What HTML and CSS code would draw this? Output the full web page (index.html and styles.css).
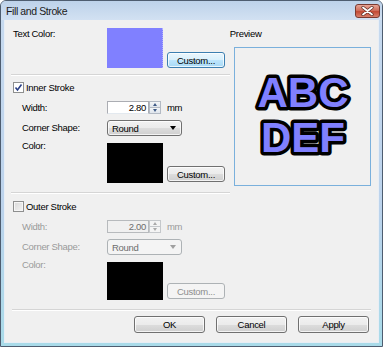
FILE: index.html
```html
<!DOCTYPE html>
<html lang="en">
<head>
    <meta charset="UTF-8">
    <title>Fill and Stroke</title>
    <link rel="stylesheet" href="styles.css">
</head>
<body>

    <div class="window">
        <div class="titlebar">
            <span class="title">Fill and Stroke</span>
            <span class="close-btn">
                <svg width="13" height="10" viewBox="0 0 13 10">
                    <path d="M2 1.5 L11 8.5 M11 1.5 L2 8.5" stroke="#5a2a22" stroke-width="3.2" stroke-linecap="round"/>
                    <path d="M2 1.5 L11 8.5 M11 1.5 L2 8.5" stroke="#fff" stroke-width="1.8" stroke-linecap="round"/>
                </svg>
            </span>
        </div>

        <div class="client">
            <div class="main">
                <div class="settings">
                    <!-- Text color -->
                    <div class="row color-row first">
                        <span class="label">Text Color:</span>
                        <div class="swatch swatch-blue"></div>
                        <button class="btn btn-small btn-hot">Custom...</button>
                    </div>

                    <div class="separator"></div>

                    <!-- Inner stroke -->
                    <div class="check-row inner">
                        <span class="checkbox checked">
                            <svg width="9" height="9" viewBox="0 0 9 9">
                                <path d="M1.5 4.5 L3.5 7 L7.5 1.5" fill="none" stroke="#2a3f86" stroke-width="1.6"/>
                            </svg>
                        </span>
                        <span>Inner Stroke</span>
                    </div>
                    <div class="row sub-row spin-row">
                        <span class="label">Width:</span>
                        <div class="spin-field">2.80</div>
                        <div class="spin-buttons">
                            <span class="spin-btn"><i class="arrow-up"></i></span>
                            <span class="spin-btn"><i class="arrow-down"></i></span>
                        </div>
                        <span class="unit">mm</span>
                    </div>
                    <div class="row sub-row combo-row">
                        <span class="label">Corner Shape:</span>
                        <div class="combo"><span>Round</span><i class="combo-arrow"></i></div>
                    </div>
                    <div class="row sub-row color-row">
                        <span class="label">Color:</span>
                        <div class="swatch swatch-black"></div>
                        <button class="btn btn-small">Custom...</button>
                    </div>

                    <div class="separator second"></div>

                    <!-- Outer stroke (disabled) -->
                    <div class="check-row outer">
                        <span class="checkbox"></span>
                        <span>Outer Stroke</span>
                    </div>
                    <div class="disabled">
                        <div class="row sub-row spin-row">
                            <span class="label">Width:</span>
                            <div class="spin-field">2.00</div>
                            <div class="spin-buttons">
                                <span class="spin-btn"><i class="arrow-up"></i></span>
                                <span class="spin-btn"><i class="arrow-down"></i></span>
                            </div>
                            <span class="unit">mm</span>
                        </div>
                        <div class="row sub-row combo-row">
                            <span class="label">Corner Shape:</span>
                            <div class="combo"><span>Round</span><i class="combo-arrow"></i></div>
                        </div>
                        <div class="row sub-row color-row short">
                            <span class="label">Color:</span>
                            <div class="swatch swatch-black"></div>
                            <button class="btn btn-small" disabled>Custom...</button>
                        </div>
                    </div>
                </div>

                <div class="preview">
                    <span class="label">Preview</span>
                    <div class="preview-box">
                        <svg width="135" height="137" viewBox="0 0 135 137">
                            <g class="preview-text">
                                <text x="68" y="59">ABC</text>
                                <text x="68" y="104">DEF</text>
                            </g>
                        </svg>
                    </div>
                </div>
            </div>

            <div class="footer">
                <div class="separator wide"></div>
                <div class="actions">
                    <button class="btn btn-action">OK</button>
                    <button class="btn btn-action">Cancel</button>
                    <button class="btn btn-action">Apply</button>
                </div>
            </div>
        </div>
    </div>

</body>
</html>
```

FILE: styles.css
```css
body {
    margin: 0;
    font-family: "Liberation Sans", Arial, sans-serif;
    font-size: 9.5px;
    letter-spacing: -0.3px;
    color: #000;
}
.window {
    width: 383px;
    height: 347px;
    box-sizing: border-box;
    border: 1px solid #4e5d70;
    border-radius: 6px 6px 0 0;
    background: linear-gradient(#c7daef, #bcd3ec 60%, #a9dbe9);
    display: flex;
    flex-direction: column;
}
.titlebar {
    height: 19px;
    display: flex;
    align-items: center;
    justify-content: space-between;
    padding-left: 5px;
    background: linear-gradient(#bdd2ea, #d2e1f2);
    border-radius: 5px 5px 0 0;
}
.title {
    font-size: 10.5px;
    letter-spacing: -0.4px;
    color: #1b1b1b;
}
.close-btn {
    width: 25px;
    height: 14px;
    margin-right: 2px;
    box-sizing: border-box;
    border: 1px solid #7a3a30;
    border-radius: 3px;
    background: linear-gradient(#e7a596, #d0705e 45%, #c24a34 55%, #d9806c);
    display: flex;
    align-items: center;
    justify-content: center;
}
.client {
    flex: 1;
    margin: 0 3px 3px;
    background: #f0f0f0;
    padding: 8px 7px 0 6px;
    border: 1px solid #e8eef5;
    border-top: none;
    box-sizing: border-box;
}
.main {
    display: flex;
}
.settings {
    width: 220px;
}
.label {
    line-height: 12px;
}
.row {
    display: flex;
    align-items: center;
}
.row .label {
    width: 94px;
    padding-left: 2px;
    flex-shrink: 0;
}
.sub-row .label {
    width: 85px;
    padding-left: 11px;
}
.color-row {
    align-items: flex-start;
    height: 40px;
}
.color-row.short {
    height: 38px;
    margin-top: 7px;
}
.color-row .btn-small {
    align-self: flex-end;
    margin-left: 4px;
}
.sub-row.color-row {
    margin-top: 7px;
}
.sub-row.color-row .label {
    margin-top: -3px;
}
.sub-row.color-row .btn-small {
    margin-bottom: 1px;
}
.swatch {
    width: 56px;
    height: 100%;
    box-sizing: border-box;
}
.swatch-blue {
    background: #8080ff;
    border-right: 1px dotted #b0b0ff;
}
.swatch-black {
    background: #000;
}
.separator {
    height: 0;
    border-top: 1px solid #d5d5d5;
    border-bottom: 1px solid #fff;
    margin-top: 6px;
}
.separator.second {
    margin-top: 9px;
}
.separator.wide {
    margin: 0 0 0 1px;
}
.btn {
    font-family: inherit;
    font-size: 9.5px;
    letter-spacing: -0.3px;
    color: #000;
    padding: 0;
    box-sizing: border-box;
    border: 1px solid #707070;
    border-radius: 3px;
    background: linear-gradient(#f2f2f2, #ebebeb 50%, #dddddd 50%, #cfcfcf);
    box-shadow: inset 0 0 0 1px rgba(255, 255, 255, 0.75);
}
.btn-small {
    width: 58px;
    height: 16px;
}
.btn-hot {
    border-color: #3c7fb1;
    background: linear-gradient(#eaf6fd, #d9f0fc 50%, #bee6fd 50%, #a7d9f5);
}
.btn:disabled {
    color: #8d8d8d;
    border-color: #adb2b5;
    background: #f4f4f4;
    box-shadow: none;
}
.check-row {
    display: flex;
    align-items: center;
    height: 11px;
    padding-left: 2px;
}
.check-row.inner {
    margin-top: 6px;
}
.check-row.outer {
    margin-top: 7px;
}
.checkbox {
    width: 11px;
    height: 11px;
    box-sizing: border-box;
    border: 1px solid #8e8f8f;
    background: linear-gradient(135deg, #d8d8d8, #f4f4f4);
    box-shadow: inset 0 0 0 1px #f6f6f6;
    margin-right: 2px;
    display: flex;
    align-items: center;
    justify-content: center;
}
.checkbox.checked {
    background: #fff;
    box-shadow: none;
}
.spin-row {
    height: 13px;
    margin-top: 8px;
}
.spin-field {
    width: 42px;
    height: 13px;
    box-sizing: border-box;
    border: 1px solid #abadb3;
    border-bottom-color: #e3e9ef;
    background: #fff;
    text-align: right;
    line-height: 11px;
    padding-right: 2px;
}
.spin-buttons {
    width: 12px;
    height: 13px;
    display: flex;
    flex-direction: column;
}
.spin-btn {
    flex: 1;
    box-sizing: border-box;
    border: 1px solid #b3bac4;
    background: linear-gradient(#f4f6f8, #dfe5ec);
    display: flex;
    align-items: center;
    justify-content: center;
}
.spin-btn + .spin-btn {
    border-top: none;
}
.arrow-up, .arrow-down {
    width: 0;
    height: 0;
    border-left: 2.5px solid transparent;
    border-right: 2.5px solid transparent;
}
.arrow-up {
    border-bottom: 3px solid #3e5a86;
}
.arrow-down {
    border-top: 3px solid #3e5a86;
}
.unit {
    margin-left: 6px;
}
.combo-row {
    height: 16px;
    margin-top: 6px;
}
.combo {
    width: 75px;
    height: 16px;
    box-sizing: border-box;
    border: 1px solid #707070;
    border-radius: 3px;
    background: linear-gradient(#f2f2f2, #ebebeb 50%, #dddddd 50%, #cfcfcf);
    box-shadow: inset 0 0 0 1px rgba(255, 255, 255, 0.75);
    display: flex;
    align-items: center;
    justify-content: space-between;
    padding: 0 5px 0 4px;
}
.combo-arrow {
    width: 0;
    height: 0;
    border-left: 3.5px solid transparent;
    border-right: 3.5px solid transparent;
    border-top: 4px solid #000;
}
.disabled {
    color: #9a9a9a;
}
.disabled .spin-field {
    background: #f0f0f0;
    border-color: #b7babd;
    color: #6d6d6d;
}
.disabled .spin-btn {
    border-color: #c5c8cb;
    background: #f4f4f4;
}
.disabled .arrow-up {
    border-bottom-color: #a9a9a9;
}
.disabled .arrow-down {
    border-top-color: #a9a9a9;
}
.disabled .combo {
    border-color: #adb2b5;
    background: #f4f4f4;
    box-shadow: none;
    color: #6d6d6d;
}
.disabled .combo-arrow {
    border-top-color: #a0a0a0;
}
.preview {
    width: 142px;
}
.preview-box {
    width: 137px;
    height: 139px;
    box-sizing: border-box;
    margin: 7px 0 0 4px;
    border: 1px solid #7ab0dc;
}
.preview-box svg {
    display: block;
}
.preview-text {
    font-family: "Liberation Sans", Arial, sans-serif;
    font-weight: bold;
    font-size: 42px;
    letter-spacing: 0;
    text-anchor: middle;
    fill: #8080ff;
    stroke: #000;
    stroke-width: 7px;
    stroke-linejoin: round;
    paint-order: stroke;
}
.footer {
    margin-top: 9px;
}
.actions {
    display: flex;
    justify-content: flex-end;
    gap: 11px;
    margin-top: 5px;
    padding-right: 2px;
}
.btn-action {
    width: 71px;
    height: 17px;
}
```
